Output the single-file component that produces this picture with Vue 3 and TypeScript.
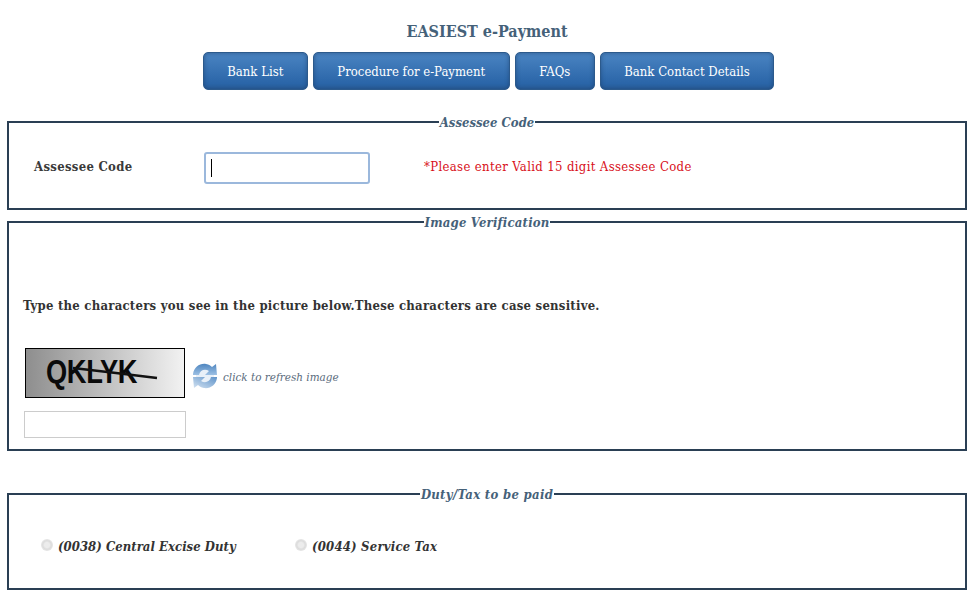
<script setup lang="ts">
const buttons: string[] = ['Bank List', 'Procedure for e-Payment', 'FAQs', 'Bank Contact Details']
</script>

<template>
  <main class="page">
    <h1 class="title">EASIEST e-Payment</h1>
    <nav class="nav">
      <button v-for="b in buttons" :key="b" class="btn" type="button">{{ b }}</button>
    </nav>

    <fieldset class="box box-code">
      <legend>Assessee Code</legend>
      <div class="code-row">
        <label class="code-label">Assessee Code</label>
        <div class="code-input"><span class="caret"></span></div>
        <span class="code-error">*Please enter Valid 15 digit Assessee Code</span>
      </div>
    </fieldset>

    <fieldset class="box box-image">
      <legend class="mid">Image Verification</legend>
      <p class="hint">Type the characters you see in the picture below.These characters are case sensitive.</p>
      <div class="captcha-row">
        <div class="captcha">
          <span class="captcha-text">QKLYK</span>
          <svg class="captcha-line" width="158" height="48" viewBox="0 0 158 48">
            <path d="M47 19 L90 24 L131 29" stroke="#111" stroke-width="2.4" fill="none" />
          </svg>
        </div>
        <svg class="refresh" width="26" height="28" viewBox="0 0 26 28">
          <defs>
            <linearGradient id="rt" x1="0" y1="0" x2="0" y2="1">
              <stop offset="0" stop-color="#4f86c0" />
              <stop offset="1" stop-color="#9cc0e4" />
            </linearGradient>
            <linearGradient id="rb" x1="1" y1="0" x2="0" y2="1">
              <stop offset="0" stop-color="#5f93c9" />
              <stop offset="1" stop-color="#d4e3f2" />
            </linearGradient>
          </defs>
          <rect x="4" y="6" width="18" height="16" rx="6" fill="#e8f0f8" />
          <path d="M1 12 C2 5 8 1 14 2 C17 2.500 19 4 20 5 L24 2 L25 13 L13 13 L17 9 C13 6.500 8 8 7 13 L1 13 Z" fill="url(#rt)" />
          <path d="M25 16 C24 23 18 27 12 26 C9 25.500 7 24 6 23 L2 26 L1 15 L13 15 L9 19 C13 21.500 18 20 19 15 L25 15 Z" fill="url(#rb)" />
        </svg>
        <span class="refresh-text">click to refresh image</span>
      </div>
      <div class="captcha-input"></div>
    </fieldset>

    <fieldset class="box box-duty">
      <legend class="wide">Duty/Tax to be paid</legend>
      <div class="radios">
        <label class="radio-item first"><span class="radio"></span>(0038) Central Excise Duty</label>
        <label class="radio-item second"><span class="radio"></span>(0044) Service Tax</label>
      </div>
    </fieldset>
  </main>
</template>

<style>
html, body { margin: 0; background: #fff; overflow: hidden; }
</style>

<style scoped>
.page {
  width: 976px;
  height: 598px;
  box-sizing: border-box;
  padding: 0 9px 0 7px;
  font-family: "DejaVu Serif Condensed", "DejaVu Serif", "Liberation Serif", serif;
  color: #333;
  overflow: hidden;
}
.title {
  margin: 0;
  padding-top: 22px;
  height: 30px;
  font-size: 16px;
  line-height: 20px;
  font-weight: 700;
  text-align: center;
  color: #456179;
}
.nav {
  display: flex;
  justify-content: center;
  gap: 5px;
  margin-left: 3px;
  height: 38px;
}
.btn {
  height: 38px;
  padding: 0 23.5px;
  border: 1px solid #2c5a8c;
  border-radius: 5px;
  background: linear-gradient(#4a84c2, #2a65a8 85%, #2a5f9c);
  box-shadow: inset 0 0 4px rgba(20, 50, 90, 0.5);
  color: #fff;
  font-family: inherit;
  font-size: 13px;
}
.box {
  margin: 0;
  padding: 0;
  width: 960px;
  box-sizing: border-box;
  border: 2px solid #2a3f54;
  position: relative;
}
.box legend {
  margin: 0 auto;
  padding: 0 1px;
  font-size: 13px;
  line-height: 16px;
  font-weight: 700;
  font-style: italic;
  color: #456179;
  transform: translateY(1px);
}
.box legend.mid { letter-spacing: 0.2px; }
.box legend.wide { letter-spacing: 0.3px; }
.box-code { margin-top: 24px; height: 96px; }
.box-image { margin-top: 4px; height: 237px; }
.box-duty { margin-top: 35px; height: 104px; }
.code-row {
  display: flex;
  align-items: center;
  height: 32px;
  margin-top: 22px;
  padding-left: 25px;
}
.code-label {
  width: 170px;
  padding-bottom: 4px;
  font-size: 13px;
  font-weight: 700;
  letter-spacing: 0.3px;
  color: #3a3a3a;
}
.code-input {
  box-sizing: border-box;
  width: 166px;
  height: 32px;
  border: 2px solid #9bb8dc;
  border-radius: 3px;
  display: flex;
  align-items: center;
  padding-left: 5px;
}
.caret { width: 1px; height: 18px; background: #000; }
.code-error {
  margin-left: 54px;
  padding-bottom: 4px;
  font-size: 13px;
  letter-spacing: 0.35px;
  color: #d8101a;
}
.hint {
  margin: 67px 0 0 14px;
  font-size: 13px;
  line-height: 18px;
  font-weight: 700;
  letter-spacing: 0.24px;
  color: #333;
}
.captcha-row {
  display: flex;
  align-items: center;
  margin: 33px 0 0 16px;
  height: 50px;
}
.captcha {
  position: relative;
  box-sizing: border-box;
  width: 160px;
  height: 50px;
  border: 1px solid #000;
  background: linear-gradient(90deg, #8e8e8e, #f2f2f2);
  overflow: hidden;
}
.captcha-text {
  position: absolute;
  left: 20px;
  top: 6px;
  font-family: "Liberation Sans", sans-serif;
  font-size: 29px;
  line-height: 34px;
  font-weight: 700;
  letter-spacing: -0.4px;
  color: #0a0a0a;
  transform: scale(0.94, 1.12);
  transform-origin: left center;
}
.captcha-line { position: absolute; left: 0; top: 0; }
.refresh { margin: 6px 0 0 7px; flex: none; }
.refresh-text {
  margin: 8px 0 0 5px;
  font-size: 11.6px;
  font-style: italic;
  color: #5a6b7c;
}
.captcha-input {
  box-sizing: border-box;
  width: 162px;
  height: 27px;
  margin: 13px 0 0 15px;
  border: 1px solid #ccc;
}
.radios {
  display: flex;
  margin-top: 37px;
  padding-left: 32px;
}
.radio-item {
  display: flex;
  align-items: center;
  font-size: 13px;
  font-weight: 700;
  font-style: italic;
  color: #333;
}
.radio-item.first { width: 254px; letter-spacing: 0.03px; }
.radio-item.second { letter-spacing: 0.2px; }
.radio {
  width: 12px;
  height: 12px;
  margin: -4px 5px 0 0;
  border-radius: 50%;
  background: radial-gradient(circle, #ececec 30%, #dcdcdc 50%, #eeeeee 85%);
}
</style>
